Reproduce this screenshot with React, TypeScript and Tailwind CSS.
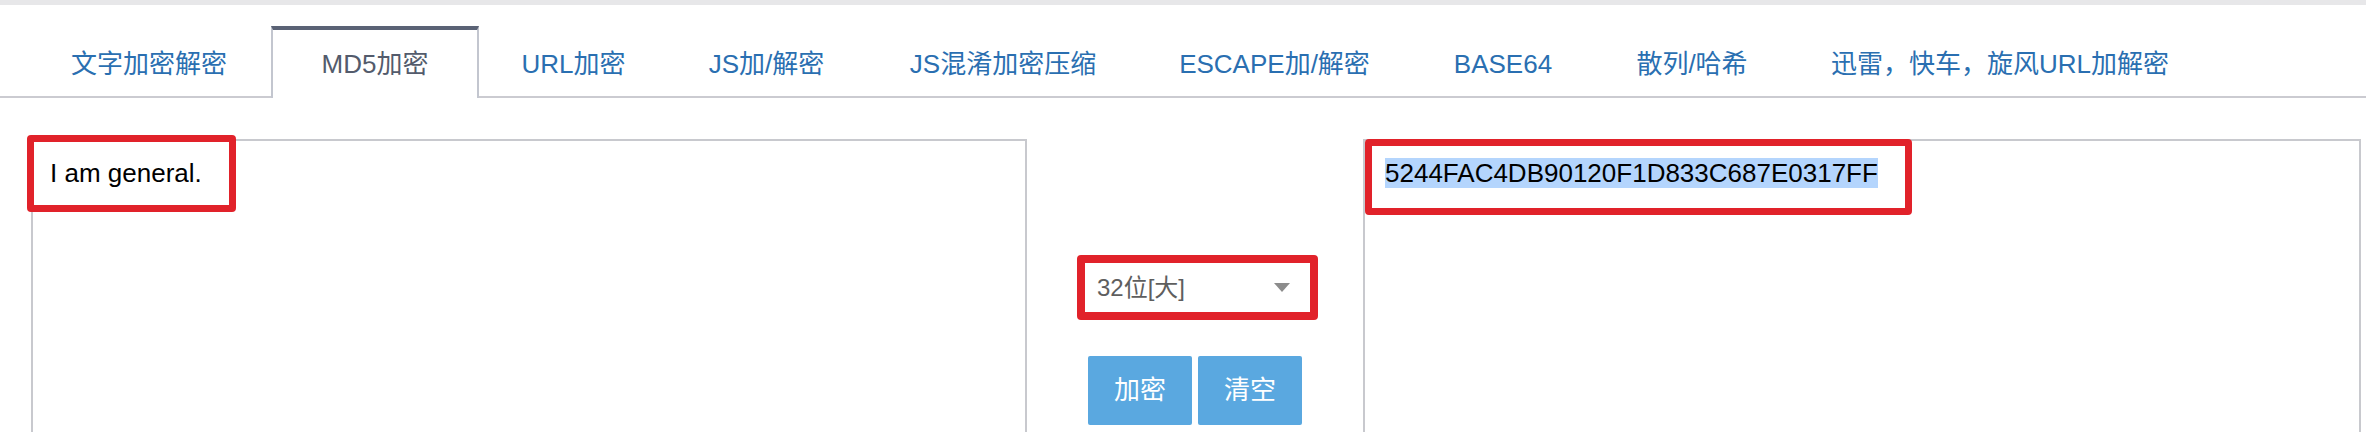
import React from "react";

const tabs: { label: string; w: string; active?: boolean }[] = [
  { label: "文字加密解密", w: "w-[244px]" },
  { label: "MD5加密", w: "w-[208px]", active: true },
  { label: "URL加密", w: "w-[189px]" },
  { label: "JS加/解密", w: "w-[197px]" },
  { label: "JS混淆加密压缩", w: "w-[276px]" },
  { label: "ESCAPE加/解密", w: "w-[267px]" },
  { label: "BASE64", w: "w-[190px]" },
  { label: "散列/哈希", w: "w-[188px]" },
  { label: "迅雷，快车，旋风URL加解密", w: "w-[428px]" },
];

export default function App() {
  return (
    <div
      className="relative w-[2366px] h-[432px] overflow-hidden bg-white"
      style={{ fontFamily: '"Liberation Sans", "Noto Sans CJK SC", Arial, sans-serif' }}
    >
      <div className="h-[5px] bg-[#e7e7e9]" />
      <div className="h-[93px] border-b-2 border-[#cbcbd1] flex items-end pl-[27px]">
        {tabs.map((t) =>
          t.active ? (
            <div
              key={t.label}
              className={`${t.w} h-[72px] -mb-[2px] relative bg-white border-t-4 border-x-2 border-t-[#5a6275] border-x-[#c3c6cf] flex items-center justify-center text-[26px] text-[#535b6c] whitespace-nowrap`}
            >
              {t.label}
            </div>
          ) : (
            <div
              key={t.label}
              className={`${t.w} h-[72px] -mb-[2px] border-t-4 border-transparent flex items-center justify-center text-[26px] text-[#2a6fb1] whitespace-nowrap`}
            >
              {t.label}
            </div>
          )
        )}
      </div>

      <div className="flex mt-[41px] pl-[31px]">
        <div className="w-[996px] h-[400px] border-2 border-[#c8c9ce] px-[17px] pt-[17px] text-[26px] leading-[30px] text-black">
          I am general.
        </div>

        <div className="w-[336px] flex flex-col items-start pt-[116px]">
          <div className="ml-[50px] border-[8px] border-[#e1222a] rounded-[4px]">
            <div className="w-[225px] h-[49px] bg-white flex items-center justify-between pl-[12px] pr-[20px]">
              <span className="text-[24px] text-[#5e5e5e]">32位[大]</span>
              <svg width="16" height="10" viewBox="0 0 16 10">
                <polygon points="0,0 16,0 8,9" fill="#8c8c8c" />
              </svg>
            </div>
          </div>
          <div className="ml-[61px] flex gap-[6px] mt-[36px]">
            <button className="w-[104px] h-[69px] bg-[#5aa8e0] rounded-[2px] text-white text-[26px] flex items-center justify-center">
              加密
            </button>
            <button className="w-[104px] h-[69px] bg-[#5aa8e0] rounded-[2px] text-white text-[26px] flex items-center justify-center">
              清空
            </button>
          </div>
        </div>

        <div className="w-[998px] h-[400px] border-2 border-[#c8c9ce] px-[20px] pt-[18px] text-[26px] leading-[28px] text-black">
          <span className="bg-[#b4d5fd]">5244FAC4DB90120F1D833C687E0317FF</span>
        </div>
      </div>

      <div className="absolute left-[27px] top-[135px] w-[209px] h-[77px] border-[7px] border-[#e1222a] rounded-[4px] pointer-events-none" />
      <div className="absolute left-[1365px] top-[139px] w-[547px] h-[76px] border-[7px] border-[#e1222a] rounded-[4px] pointer-events-none" />
    </div>
  );
}
